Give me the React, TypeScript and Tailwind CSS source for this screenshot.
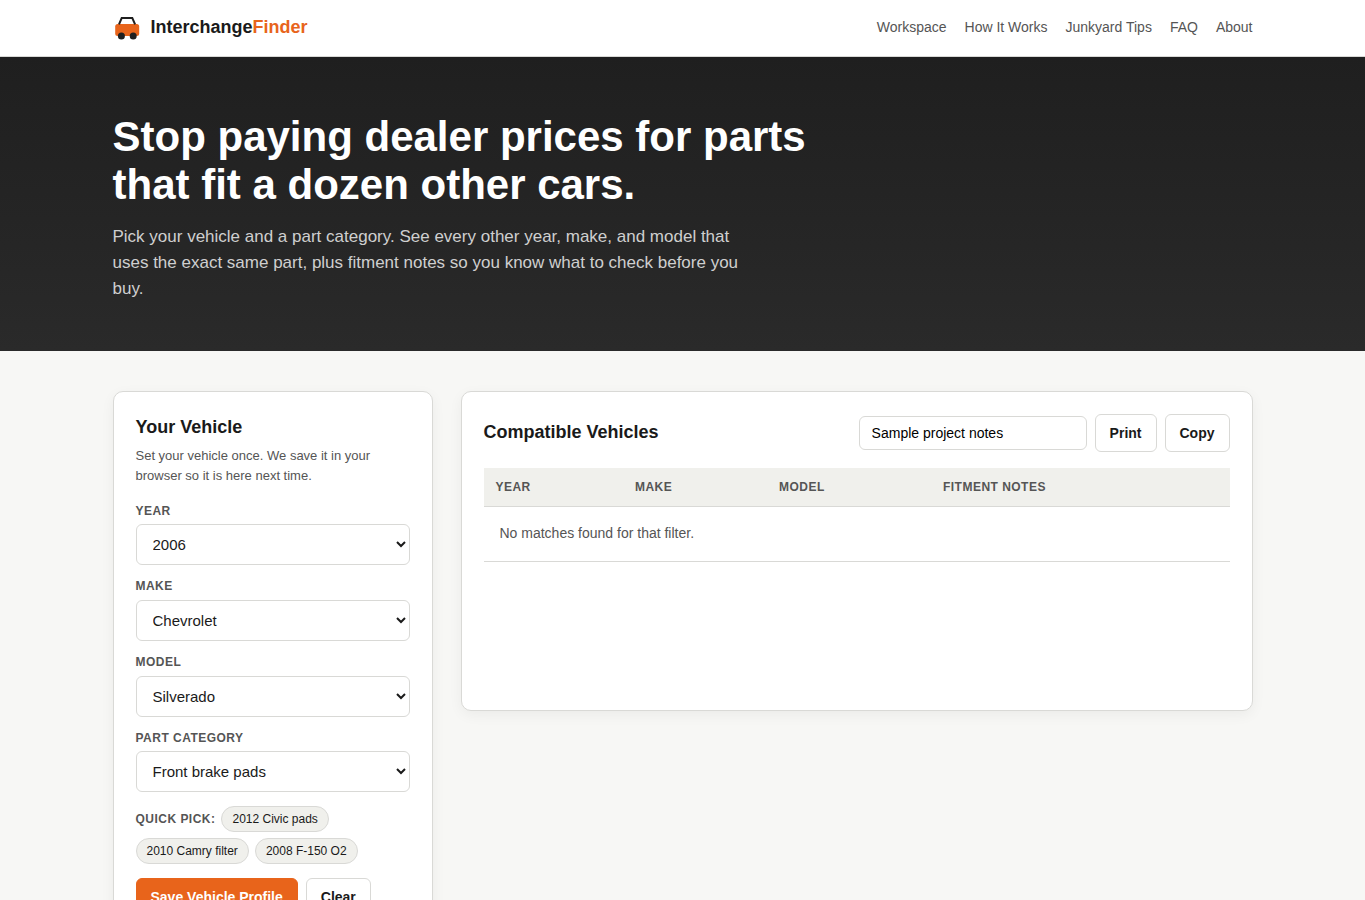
import { useState } from 'react'

const NAV_LINKS = ['Workspace', 'How It Works', 'Junkyard Tips', 'FAQ', 'About']

const FIELDS = [
  { id: 'year', label: 'Year', options: ['2006', '2008', '2010', '2012'] },
  { id: 'make', label: 'Make', options: ['Chevrolet', 'Ford', 'Honda', 'Toyota'] },
  { id: 'model', label: 'Model', options: ['Silverado'] },
  { id: 'part', label: 'Part Category', options: ['Front brake pads', 'Oil filter', 'O2 sensor'] },
]

const QUICK_PICKS = ['2012 Civic pads', '2010 Camry filter', '2008 F-150 O2']

function Logo() {
  return (
    <svg width="28" height="28" viewBox="0 0 28 28" fill="none" className="shrink-0">
      <rect x="2.2" y="10" width="24" height="12" rx="2.5" fill="#e8641b" />
      <path d="M6 10.3L8.7 4h10.6l2.8 6.3" stroke="#1f1f1f" strokeWidth="2" />
      <circle cx="8.4" cy="22" r="3.5" fill="#1f1f1f" />
      <circle cx="20.2" cy="22" r="3.5" fill="#1f1f1f" />
    </svg>
  )
}

function Header() {
  return (
    <header className="bg-white border-b border-[#d9d9d6]">
      <div className="max-w-[1180px] h-14 mx-auto px-5 flex items-center justify-between">
        <div className="flex items-center gap-2.5">
          <Logo />
          <span className="text-[18px] font-bold leading-7 pb-0.5">
            Interchange<span className="text-[#e8641b]">Finder</span>
          </span>
        </div>
        <nav className="flex gap-[18px] text-sm text-[#555555] pb-0.5">
          {NAV_LINKS.map(link => (
            <a key={link} href="#">{link}</a>
          ))}
        </nav>
      </div>
    </header>
  )
}

function VehicleForm() {
  const [values, setValues] = useState<Record<string, string>>({
    year: '2006',
    make: 'Chevrolet',
    model: 'Silverado',
    part: 'Front brake pads',
  })

  return (
    <section className="bg-white border border-[#d9d9d6] rounded-[10px] p-[22px] shadow-[0_4px_14px_rgba(0,0,0,0.05)]">
      <h2 className="text-[18px] font-bold leading-[1.55]">Your Vehicle</h2>
      <p className="mt-1 mb-4 text-[13px] leading-[1.55] text-[#555555]">
        Set your vehicle once. We save it in your browser so it is here next time.
      </p>

      {FIELDS.map(field => (
        <div key={field.id} className="mb-3">
          <label htmlFor={field.id} className="block mb-1 text-xs leading-[1.55] font-bold uppercase tracking-[0.04em] text-[#555555]">
            {field.label}
          </label>
          <select
            id={field.id}
            value={values[field.id]}
            onChange={(e) => setValues({ ...values, [field.id]: e.target.value })}
            className="block w-full h-[41px] px-3 border border-[#d9d9d6] rounded-md bg-white text-[15px]"
          >
            {field.options.map(option => (
              <option key={option} value={option}>{option}</option>
            ))}
          </select>
        </div>
      ))}

      {/* Quick picks */}
      <div className="mt-3.5 flex flex-wrap items-center gap-1.5">
        <span className="text-xs font-bold uppercase tracking-[0.04em] text-[#555555]">Quick pick:</span>
        {QUICK_PICKS.map(pick => (
          <button key={pick} className="h-[26px] px-2.5 border border-[#d9d9d6] rounded-full bg-[#f0f0ec] text-xs">
            {pick}
          </button>
        ))}
      </div>

      <div className="mt-3.5 flex gap-2">
        <button className="h-[38px] px-3.5 border border-[#e8641b] rounded-md bg-[#e8641b] text-white text-sm font-bold">
          Save Vehicle Profile
        </button>
        <button className="h-[38px] px-3.5 border border-[#d9d9d6] rounded-md bg-white text-sm font-bold">Clear</button>
      </div>
    </section>
  )
}

function Results() {
  const [filter, setFilter] = useState('Sample project notes')

  return (
    <section className="min-h-80 bg-white border border-[#d9d9d6] rounded-[10px] p-[22px] shadow-[0_4px_14px_rgba(0,0,0,0.05)]">
      <div className="mb-4 flex items-center justify-between">
        <h2 className="text-[18px] font-bold leading-7 pb-0.5">Compatible Vehicles</h2>
        <div className="flex items-center gap-2">
          <input
            value={filter}
            onChange={(e) => setFilter(e.target.value)}
            className="w-[228px] h-[34px] px-3 border border-[#d9d9d6] rounded-md text-sm text-black"
          />
          <button className="h-[38px] px-3.5 border border-[#d9d9d6] rounded-md bg-white text-sm font-bold">Print</button>
          <button className="h-[38px] px-3.5 border border-[#d9d9d6] rounded-md bg-white text-sm font-bold">Copy</button>
        </div>
      </div>

      <table className="w-full table-fixed border-collapse text-left text-[#555555]">
        <thead>
          <tr className="h-[39px] bg-[#f0f0ec] border-b border-[#d9d9d6] text-xs uppercase tracking-[0.04em]">
            <th className="w-[139.5px] px-3 font-bold">Year</th>
            <th className="w-[144px] px-3 font-bold">Make</th>
            <th className="w-[164px] px-3 font-bold">Model</th>
            <th className="px-3 font-bold">Fitment Notes</th>
          </tr>
        </thead>
        <tbody>
          <tr className="border-b border-[#d9d9d6]">
            <td colSpan={4} className="p-4 text-sm leading-[1.55]">No matches found for that filter.</td>
          </tr>
        </tbody>
      </table>
    </section>
  )
}

export default function App() {
  return (
    <div className="h-[900px] overflow-hidden bg-[#f7f7f5] text-[#1a1a1a] font-['Liberation_Sans',Arial,sans-serif]">
      <Header />

      {/* Hero */}
      <div className="bg-linear-to-b from-[#1f1f1f] to-[#2a2a2a]">
        <div className="max-w-[1180px] mx-auto px-5 pt-14 pb-12">
          <h1 className="max-w-[760px] text-[42px] leading-[1.15] font-bold text-white">
            Stop paying dealer prices for parts that fit a dozen other cars.
          </h1>
          <p className="mt-3.5 max-w-[640px] text-[17px] leading-[1.55] text-[#cfcfcf]">
            Pick your vehicle and a part category. See every other year, make, and model that uses the exact same
            part, plus fitment notes so you know what to check before you buy.
          </p>
        </div>
      </div>

      {/* Workspace */}
      <main className="max-w-[1180px] mx-auto px-5 pt-10 grid grid-cols-[320px_1fr] gap-7 items-start">
        <VehicleForm />
        <Results />
      </main>
    </div>
  )
}
